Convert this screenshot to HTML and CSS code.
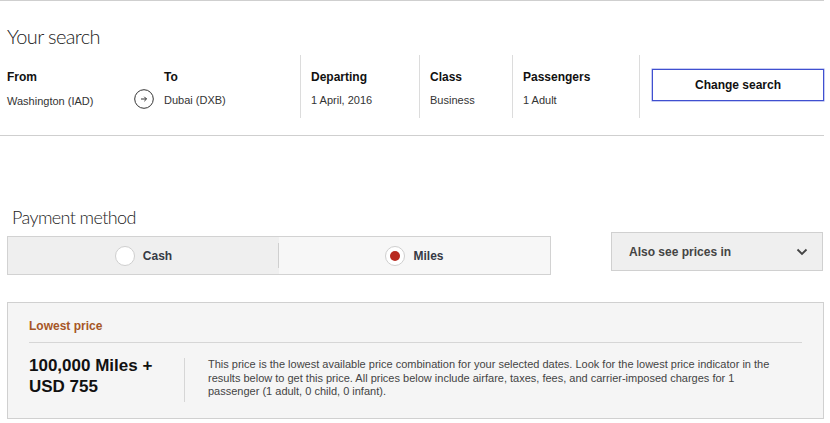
FILE: index.html
```html
<!DOCTYPE html>
<html>
<head>
<meta charset="utf-8">
<link rel="stylesheet" href="styles.css">
</head>
<body>
<div class="page">
  <div class="rule"></div>
  <h1 class="title">Your search</h1>
  <div class="summary">
    <div class="col col-from">
      <div class="label">From</div>
      <div class="value value-from">
        <span>Washington (IAD)</span>
        <span class="arrow">
          <svg width="20" height="20" viewBox="0 0 20 20"><circle cx="10" cy="10" r="9.3" fill="none" stroke="#333" stroke-width="1"/><path d="M7 10h5.5M10.3 7.8l2.2 2.2-2.2 2.2" fill="none" stroke="#333" stroke-width="1"/></svg>
        </span>
      </div>
    </div>
    <div class="col">
      <div class="label">To</div>
      <div class="value">Dubai (DXB)</div>
    </div>
    <div class="col col-div">
      <div class="label">Departing</div>
      <div class="value">1 April, 2016</div>
    </div>
    <div class="col col-div">
      <div class="label">Class</div>
      <div class="value">Business</div>
    </div>
    <div class="col col-div">
      <div class="label">Passengers</div>
      <div class="value">1 Adult</div>
    </div>
    <div class="col col-div col-btn">
      <button class="change">Change search</button>
    </div>
  </div>
  <div class="rule rule-bottom"></div>

  <div class="payment-row">
    <div class="payment">
      <h2 class="subtitle">Payment method</h2>
      <div class="segment">
        <div class="seg seg-cash">
          <span class="radio"></span><span class="seg-label">Cash</span>
        </div>
        <div class="seg seg-miles">
          <span class="radio radio-on"></span><span class="seg-label">Miles</span>
        </div>
      </div>
    </div>
    <div class="also">
      <span>Also see prices in</span>
      <svg width="12" height="8" viewBox="0 0 12 8"><path d="M1.5 1.5l4.5 4.5 4.5-4.5" fill="none" stroke="#444" stroke-width="1.8"/></svg>
    </div>
  </div>

  <div class="panel">
    <div class="panel-head">Lowest price</div>
    <div class="panel-body">
      <div class="price">100,000 Miles +<br>USD 755</div>
      <div class="desc">This price is the lowest available price combination for your selected dates. Look for the lowest price indicator in the results below to get this price. All prices below include airfare, taxes, fees, and carrier-imposed charges for 1 passenger (1 adult, 0 child, 0 infant).</div>
    </div>
  </div>
</div>
</body>
</html>
```

FILE: styles.css
```css
* { box-sizing: border-box; }
html, body { margin: 0; padding: 0; background: #fff; }
body {
  font-family: "Liberation Sans", Arial, sans-serif;
  color: #222;
  width: 830px;
  height: 423px;
  overflow: hidden;
}
.page { width: 830px; }
.rule {
  width: 824px;
  height: 1px;
  background: #cfcfcf;
}
.title {
  margin: 22px 0 0 7px;
  font-family: Lato, "Open Sans", sans-serif;
  font-weight: 300;
  font-size: 20px;
  line-height: 26px;
  color: #222;
  letter-spacing: -0.6px;
}
.summary {
  display: grid;
  grid-template-columns: 157px 136px 119px 93px 127px 184px;
  margin: 6px 0 0 7px;
  height: 63px;
}
.col { padding-top: 15px; }
.col-div { border-left: 1px solid #dcdcdc; padding-left: 10px; }
.label {
  font-weight: bold;
  font-size: 12px;
  line-height: 15px;
  color: #111;
}
.value {
  margin-top: 8px;
  font-size: 11px;
  line-height: 15px;
  color: #333;
}
.value-from {
  display: flex;
  align-items: center;
  justify-content: space-between;
  padding-right: 10px;
}
.arrow { display: flex; margin-top: -4px; }
.col-btn { padding: 14px 0 0 12px; }
.change {
  width: 172px;
  height: 32px;
  background: #fff;
  border: 1px solid #3f4fd0;
  box-shadow: 0 0 0 0.5px #8f9ae6;
  font-family: "Liberation Sans", Arial, sans-serif;
  font-weight: bold;
  font-size: 12px;
  color: #111;
  padding: 0;
}
.rule-bottom { margin-top: 17px; }

.payment-row {
  display: flex;
  align-items: flex-end;
  margin: 70px 0 0 7px;
}
.subtitle {
  margin: 0 0 8px 5px;
  font-family: Lato, "Open Sans", sans-serif;
  font-weight: 300;
  font-size: 18px;
  line-height: 22px;
  color: #222;
  letter-spacing: -0.6px;
}
.segment {
  width: 544px;
  height: 39px;
  border: 1px solid #d2d2d2;
  display: flex;
}
.seg {
  flex: 1;
  display: flex;
  align-items: center;
  justify-content: center;
  gap: 8px;
}
.seg-cash { background: #efefef; position: relative; }
.seg-cash::after {
  content: "";
  position: absolute;
  right: 0;
  top: 6px;
  bottom: 6px;
  width: 1px;
  background: #cfcfcf;
}
.seg-miles { background: #f7f7f7; }
.radio {
  width: 20px;
  height: 20px;
  border-radius: 50%;
  background: #fff;
  border: 1px solid #cfcfcf;
  display: flex;
  align-items: center;
  justify-content: center;
}
.radio-on::after {
  content: "";
  width: 10px;
  height: 10px;
  border-radius: 50%;
  background: #b82a1f;
}
.seg-label {
  font-weight: bold;
  font-size: 12px;
  color: #363a45;
}
.also {
  margin: 0 0 4px 60px;
  width: 212px;
  height: 39px;
  background: #efefef;
  border: 1px solid #d0d0d0;
  display: flex;
  align-items: center;
  justify-content: space-between;
  padding: 0 14px 0 17px;
  font-weight: bold;
  font-size: 12px;
  color: #444;
}
.panel {
  margin: 27px 0 0 7px;
  width: 817px;
  background: #f5f5f5;
  border: 1px solid #d0d0d0;
  padding: 16px 21px 16px 21px;
}
.panel-head {
  font-weight: bold;
  font-size: 12px;
  line-height: 14px;
  color: #a65627;
  padding-bottom: 9px;
  border-bottom: 1px solid #d6d6d6;
}
.panel-body {
  display: flex;
  margin-top: 15px;
}
.price {
  width: 155px;
  flex: none;
  margin-top: -3px;
  font-weight: bold;
  font-size: 17px;
  line-height: 21px;
  color: #111;
}
.desc {
  border-left: 1px solid #d6d6d6;
  padding: 0 20px 3px 23px;
  font-size: 11px;
  line-height: 13.5px;
  color: #444;
}
```
